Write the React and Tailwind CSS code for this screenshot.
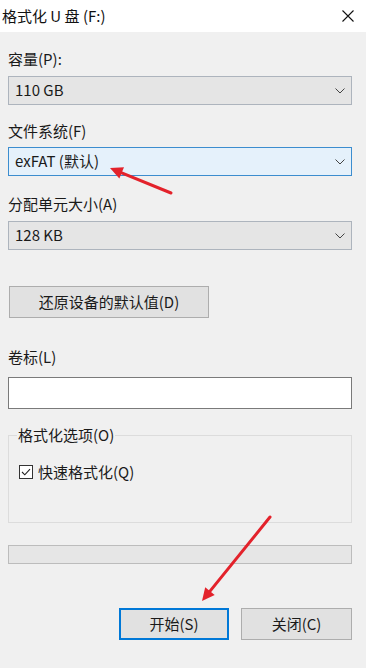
import React from "react";

const font = { fontFamily: '"Noto Sans CJK SC", "Noto Sans", "Liberation Sans", sans-serif' };

const Chevron = () => (
  <svg width="10" height="6" viewBox="0 0 10 6" className="shrink-0">
    <path d="M0.5 0.5 L5 5 L9.5 0.5" fill="none" stroke="#444" strokeWidth="1" />
  </svg>
);

const Select = ({ value, focused }) => (
  <div
    className={
      "h-[29px] flex items-center justify-between pl-[6px] pr-[6px] border " +
      (focused ? "bg-[#e5f1fb] border-[#3c8dcf]" : "bg-[#e5e5e5] border-[#adb4bd]")
    }
  >
    <span className="text-[15px] text-[#1a1a1a]">{value}</span>
    <Chevron />
  </div>
);

const Label = ({ children, className = "" }) => (
  <div className={"h-[20px] leading-[20px] text-[15px] text-[#1a1a1a] " + className}>{children}</div>
);

const Arrow = ({ x1, y1, x2, y2 }) => {
  const a = Math.atan2(y2 - y1, x2 - x1);
  const len = 14;
  const w = 0.45;
  const p1 = [x2 - len * Math.cos(a - w), y2 - len * Math.sin(a - w)];
  const p2 = [x2 - len * Math.cos(a + w), y2 - len * Math.sin(a + w)];
  return (
    <g>
      <line x1={x1} y1={y1} x2={x2 - 6 * Math.cos(a)} y2={y2 - 6 * Math.sin(a)} stroke="#e3222b" strokeWidth="3" strokeLinecap="round" />
      <polygon points={`${x2},${y2} ${p1[0]},${p1[1]} ${p2[0]},${p2[1]}`} fill="#e3222b" />
    </g>
  );
};

export default function App() {
  return (
    <div className="relative w-[366px] h-[668px] bg-[#f0f0f0] overflow-hidden" style={font}>
      {/* title bar */}
      <div className="h-[32px] bg-white flex items-center justify-between pl-[2px] pr-[12px]">
        <span className="text-[15px] text-[#111]">格式化 U 盘 (F:)</span>
        <svg width="12" height="12" viewBox="0 0 12 12">
          <path d="M0.5 0.5 L11.5 11.5 M11.5 0.5 L0.5 11.5" stroke="#111" strokeWidth="1.1" />
        </svg>
      </div>

      <div className="pl-[8px] pr-[14px] pt-[17px]">
        <Label>容量(P):</Label>
        <div className="mt-[7px]">
          <Select value="110 GB" />
        </div>

        <Label className="mt-[16px]">文件系统(F)</Label>
        <div className="mt-[6px]">
          <Select value="exFAT (默认)" focused />
        </div>

        <Label className="mt-[18px]">分配单元大小(A)</Label>
        <div className="mt-[7px]">
          <Select value="128 KB" />
        </div>

        <button className="mt-[36px] ml-[1px] w-[200px] h-[32px] bg-[#e1e1e1] border border-[#adadad] text-[15px] text-[#1a1a1a] flex items-center justify-center">
          还原设备的默认值(D)
        </button>

        <Label className="mt-[29px]">卷标(L)</Label>
        <div className="mt-[10px] h-[32px] bg-white border border-[#7a7a7a]" />

        <fieldset className="mt-[16px] h-[98px] border border-[#dcdcdc] px-[8px]">
          <legend className="px-[1px] h-[20px] leading-[20px] text-[15px] text-[#1a1a1a]">格式化选项(O)</legend>
          <div className="mt-[17px] flex items-center gap-[5px] ml-[2px]">
            <div className="w-[14px] h-[14px] bg-white border border-[#333] flex items-center justify-center">
              <svg width="10" height="8" viewBox="0 0 10 8">
                <path d="M1 4 L3.8 6.8 L9 1.2" fill="none" stroke="#222" strokeWidth="1.1" />
              </svg>
            </div>
            <span className="text-[15px] text-[#1a1a1a] leading-[20px]">快速格式化(Q)</span>
          </div>
        </fieldset>

        <div className="mt-[22px] h-[19px] bg-[#e6e6e6] border border-[#bcbcbc]" />

        <div className="mt-[44px] flex justify-end gap-[12px]">
          <button className="w-[110px] h-[32px] bg-[#e1e1e1] border-2 border-[#0078d7] text-[15px] text-[#1a1a1a] flex items-center justify-center">
            开始(S)
          </button>
          <button className="w-[111px] h-[32px] bg-[#e1e1e1] border border-[#adadad] text-[15px] text-[#1a1a1a] flex items-center justify-center">
            关闭(C)
          </button>
        </div>
      </div>

      {/* annotation arrows */}
      <svg className="absolute inset-0 pointer-events-none" width="366" height="668">
        <Arrow x1={171} y1={193} x2={110} y2={168} />
        <Arrow x1={270} y1={517} x2={202} y2={601} />
      </svg>
    </div>
  );
}
